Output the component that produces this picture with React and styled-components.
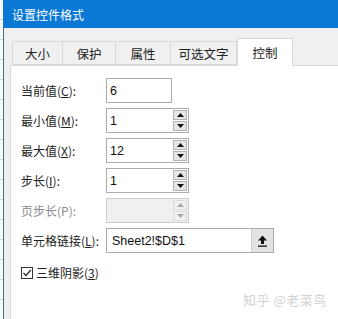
import styled, { createGlobalStyle } from "styled-components";

const Global = createGlobalStyle`
  html, body { margin: 0; padding: 0; }
  body {
    width: 338px;
    height: 319px;
    overflow: hidden;
    font-family: "Noto Sans CJK SC", "Noto Sans", sans-serif;
    background: #f0f0f0;
  }
`;

const Screen = styled.div`
  display: flex;
  width: 338px;
  height: 319px;
  position: relative;
`;

const Sheet = styled.div`
  width: 3px;
  background: repeating-linear-gradient(
    to bottom,
    #fafafa 0,
    #fafafa 19px,
    #d4d4d4 19px,
    #d4d4d4 20px
  );
`;

const Dialog = styled.div`
  flex: 1;
  display: flex;
  flex-direction: column;
  min-width: 0;
`;

const TitleBar = styled.div`
  height: 28px;
  background: #0a78d4;
  color: #fff;
  font-size: 12px;
  display: flex;
  align-items: center;
  padding-left: 9px;
`;

const Body = styled.div`
  flex: 1;
  background: #f0f0f0;
  border-left: 1px solid #3d7380;
  padding: 10px 0 0 6px;
  display: flex;
  flex-direction: column;
`;

const Tabs = styled.div`
  display: flex;
  align-items: flex-end;
  margin-left: 2px;
  height: 27px;
  position: relative;
  z-index: 1;
`;

const Tab = styled.div`
  width: ${(p) => p.$w}px;
  height: ${(p) => (p.$active ? 28 : 24)}px;
  margin-bottom: ${(p) => (p.$active ? -1 : 0)}px;
  box-sizing: border-box;
  background: ${(p) => (p.$active ? "#fff" : "#f0f0f0")};
  border: 1px solid #d9d9d9;
  border-bottom: ${(p) => (p.$active ? "none" : "1px solid #d9d9d9")};
  border-left: ${(p) => (p.$first || p.$active ? "1px solid #d9d9d9" : "none")};
  display: flex;
  align-items: center;
  justify-content: center;
  padding-top: ${(p) => (p.$active ? 0 : 1)}px;
  font-size: 12.5px;
  color: #222;
`;

const Panel = styled.div`
  flex: 1;
  background: #fff;
  border: 1px solid #d9d9d9;
  border-right: none;
  border-bottom: none;
  padding: 12px 0 0 10px;
  display: flex;
  flex-direction: column;
  gap: 5px;
`;

const Row = styled.div`
  display: grid;
  grid-template-columns: 85px auto;
  align-items: center;
  height: 25px;
`;

const Label = styled.span`
  font-size: 12px;
  color: ${(p) => (p.$disabled ? "#8a8a8a" : "#222")};
  white-space: nowrap;
  u { text-underline-offset: 1px; }
`;

const Field = styled.div`
  width: ${(p) => p.$w}px;
  height: 25px;
  box-sizing: border-box;
  border: 1px solid ${(p) => (p.$disabled ? "#cccccc" : "#ababab")};
  background: ${(p) => (p.$disabled ? "#f0f0f0" : "#fff")};
  display: flex;
  align-items: center;
  justify-content: space-between;
  padding-left: 3px;
  font-family: "Liberation Sans", Arial, sans-serif;
  font-size: 12.5px;
  color: #111;
`;

const Spinner = styled.div`
  width: 14px;
  height: 21px;
  margin-right: 1px;
  display: flex;
  flex-direction: column;
  gap: 1px;
`;

const SpinBtn = styled.div`
  flex: 1;
  box-sizing: border-box;
  background: ${(p) => (p.$disabled ? "#f0f0f0" : "#e6e6e6")};
  border: 1px solid ${(p) => (p.$disabled ? "#dcdcdc" : "#b4b4b4")};
  display: flex;
  align-items: center;
  justify-content: center;
  color: ${(p) => (p.$disabled ? "#a8a8a8" : "#111")};
`;

const RefButton = styled.div`
  width: 21px;
  height: 23px;
  background: #e3e3e3;
  border-left: 1px solid #cfcfcf;
  display: flex;
  align-items: center;
  justify-content: center;
`;

const CheckRow = styled.label`
  display: flex;
  align-items: center;
  gap: 3px;
  margin-top: 6px;
  font-size: 12px;
  color: #222;
`;

const Box = styled.span`
  width: 12px;
  height: 12px;
  box-sizing: border-box;
  border: 1px solid #333;
  display: flex;
  align-items: center;
  justify-content: center;
  background: #fff;
`;

const Watermark = styled.div`
  position: absolute;
  left: 243px;
  top: 290px;
  font-size: 13px;
  color: #d2d2d2;
  letter-spacing: 0.5px;
`;

function Arrow({ down }) {
  return (
    <svg width="7" height="4" viewBox="0 0 7 4">
      {down ? (
        <path d="M0 0 L7 0 L3.5 4 Z" fill="currentColor" />
      ) : (
        <path d="M0 4 L7 4 L3.5 0 Z" fill="currentColor" />
      )}
    </svg>
  );
}

function Spin({ disabled }) {
  return (
    <Spinner>
      <SpinBtn $disabled={disabled}>
        <Arrow />
      </SpinBtn>
      <SpinBtn $disabled={disabled}>
        <Arrow down />
      </SpinBtn>
    </Spinner>
  );
}

const tabs = [
  { t: "大小", w: 51 },
  { t: "保护", w: 53 },
  { t: "属性", w: 55 },
  { t: "可选文字", w: 66 },
  { t: "控制", w: 56, active: true },
];

const spins = [
  { pre: "最小值(", k: "M", v: "1" },
  { pre: "最大值(", k: "X", v: "12" },
  { pre: "步长(", k: "I", v: "1" },
];

export default function App() {
  return (
    <>
      <Global />
      <Screen>
        <Sheet />
        <Dialog>
          <TitleBar>设置控件格式</TitleBar>
          <Body>
            <Tabs>
              {tabs.map((x, i) => (
                <Tab key={x.t} $w={x.w} $active={x.active} $first={i === 0}>
                  {x.t}
                </Tab>
              ))}
            </Tabs>
            <Panel>
              <Row>
                <Label>
                  当前值(<u>C</u>):
                </Label>
                <Field $w={66}>6</Field>
              </Row>
              {spins.map((s) => (
                <Row key={s.k}>
                  <Label>
                    {s.pre}
                    <u>{s.k}</u>):
                  </Label>
                  <Field $w={83}>
                    {s.v}
                    <Spin />
                  </Field>
                </Row>
              ))}
              <Row>
                <Label $disabled>页步长(P):</Label>
                <Field $w={83} $disabled>
                  <span />
                  <Spin disabled />
                </Field>
              </Row>
              <Row>
                <Label>
                  单元格链接(<u>L</u>):
                </Label>
                <Field $w={168}>
                  <span style={{ paddingLeft: 2 }}>Sheet2!$D$1</span>
                  <RefButton>
                    <svg width="11" height="12" viewBox="0 0 11 12">
                      <path d="M5.5 0.5 L10 5.5 L7 5.5 L7 9 L4 9 L4 5.5 L1 5.5 Z" fill="#111" />
                      <rect x="1" y="10.5" width="9" height="1.3" fill="#111" />
                    </svg>
                  </RefButton>
                </Field>
              </Row>
              <CheckRow>
                <Box>
                  <svg width="10" height="10" viewBox="0 0 10 10">
                    <path d="M1.5 5 L4 7.5 L8.8 2" stroke="#222" strokeWidth="1.2" fill="none" />
                  </svg>
                </Box>
                <span>
                  三维阴影(<u>3</u>)
                </span>
              </CheckRow>
            </Panel>
          </Body>
        </Dialog>
        <Watermark>知乎 @老菜鸟</Watermark>
      </Screen>
    </>
  );
}
